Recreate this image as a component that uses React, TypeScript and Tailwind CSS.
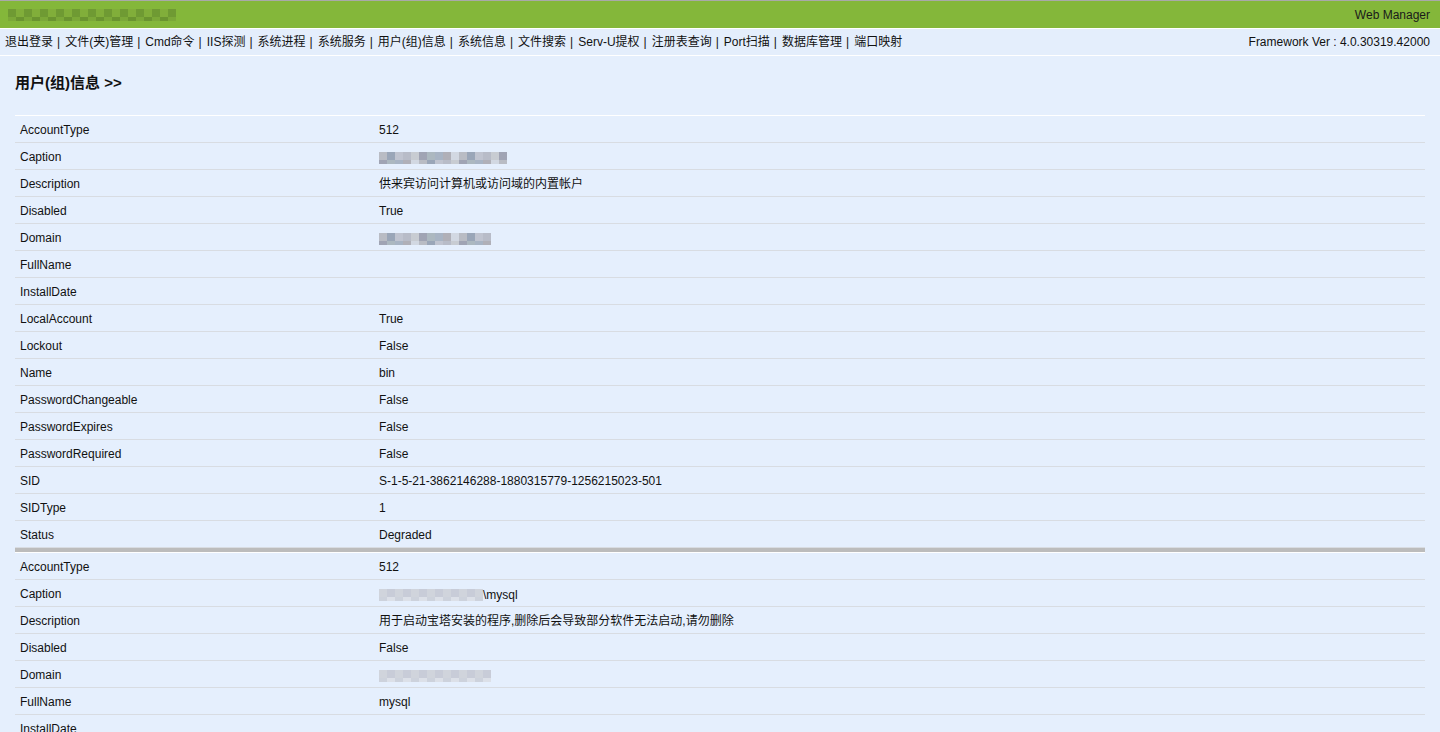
import React from "react";

const font = { fontFamily: '"Liberation Sans", "Noto Sans CJK SC", sans-serif' };

const menu = [
  "退出登录",
  "文件(夹)管理",
  "Cmd命令",
  "IIS探测",
  "系统进程",
  "系统服务",
  "用户(组)信息",
  "系统信息",
  "文件搜索",
  "Serv-U提权",
  "注册表查询",
  "Port扫描",
  "数据库管理",
  "端口映射",
];

// pixelated "redacted" block
function Mosaic({ cols, palette, rows = 2, size = 8 }: { cols: number; palette: string[]; rows?: number; size?: number }) {
  const cells = [];
  for (let r = 0; r < rows; r++) {
    for (let c = 0; c < cols; c++) {
      cells.push(
        <span
          key={r + "-" + c}
          style={{ width: size, height: r === 0 ? size : size / 2, background: palette[(c * 3 + r * 5) % palette.length] }}
        />
      );
    }
  }
  return (
    <span className="inline-grid align-middle" style={{ gridTemplateColumns: `repeat(${cols}, ${size}px)` }}>
      {cells}
    </span>
  );
}

const grayPal = ["#b9bcc4", "#a8b4c4", "#c8ccd2", "#9aa6b8", "#b0b0b8", "#a0a4b4", "#c0c4d0", "#d2d8e2", "#acb8c0", "#b8bcc8"];
const grayPal2 = ["#d0d4dc", "#c4c8d4", "#dce0e8", "#c8ccd8", "#d8dce6", "#cdd2dc"];
const greenPal = ["#6f9a33", "#79a636", "#6a9430", "#81ae3a", "#73a035", "#7ba838"];

type Row = [string, React.ReactNode];

const user1: Row[] = [
  ["AccountType", "512"],
  ["Caption", <Mosaic cols={16} palette={grayPal} />],
  ["Description", "供来宾访问计算机或访问域的内置帐户"],
  ["Disabled", "True"],
  ["Domain", <Mosaic cols={14} palette={grayPal} />],
  ["FullName", ""],
  ["InstallDate", ""],
  ["LocalAccount", "True"],
  ["Lockout", "False"],
  ["Name", "bin"],
  ["PasswordChangeable", "False"],
  ["PasswordExpires", "False"],
  ["PasswordRequired", "False"],
  ["SID", "S-1-5-21-3862146288-1880315779-1256215023-501"],
  ["SIDType", "1"],
  ["Status", "Degraded"],
];

const user2: Row[] = [
  ["AccountType", "512"],
  [
    "Caption",
    <span className="inline-flex items-center">
      <Mosaic cols={13} palette={grayPal2} />
      <span>\mysql</span>
    </span>,
  ],
  ["Description", "用于启动宝塔安装的程序,删除后会导致部分软件无法启动,请勿删除"],
  ["Disabled", "False"],
  ["Domain", <Mosaic cols={14} palette={grayPal2} />],
  ["FullName", "mysql"],
  ["InstallDate", ""],
];

function Rows({ rows }: { rows: Row[] }) {
  return (
    <>
      {rows.map(([k, v], i) => (
        <tr key={k + i} className="h-[27px] border-b border-[#d8dce2]">
          <td className="w-[359px] pl-[5px] pt-[2px]">{k}</td>
          <td className="pl-[5px] pt-[2px]">{v}</td>
        </tr>
      ))}
    </>
  );
}

export default function App() {
  return (
    <div className="min-h-screen bg-[#e5effd] text-[12px] text-[#111]" style={font}>
      <div className="h-[28px] border-t border-[#a9a9a9] bg-[#84b73a] flex items-center justify-between pl-[8px] pr-[10px]">
        <Mosaic cols={21} palette={greenPal} rows={2} size={8} />
        <span className="text-[#1a1a1a]">Web Manager</span>
      </div>
      <div className="h-[28px] border-t border-white border-b border-[#d6dbe2] bg-[#e4eefc] flex items-center justify-between pl-[5px] pr-[10px]">
        <div className="flex items-center whitespace-nowrap">
          {menu.map((m, i) => (
            <span key={m}>
              {i > 0 && <span className="pl-[4px] pr-[5px]">|</span>}
              {m}
            </span>
          ))}
        </div>
        <span>Framework Ver : 4.0.30319.42000</span>
      </div>
      <div className="px-[15px]">
        <div className="h-[54px] mb-[5px] flex items-center text-[15px] font-bold">用户(组)信息 &gt;&gt;</div>
        <table className="w-full border-collapse border-t border-white">
          <tbody>
            <Rows rows={user1} />
            <tr className="h-[5px] border-b border-white">
              <td colSpan={2} className="bg-[#bcbcbc] p-0" />
            </tr>
            <Rows rows={user2} />
          </tbody>
        </table>
      </div>
    </div>
  );
}
